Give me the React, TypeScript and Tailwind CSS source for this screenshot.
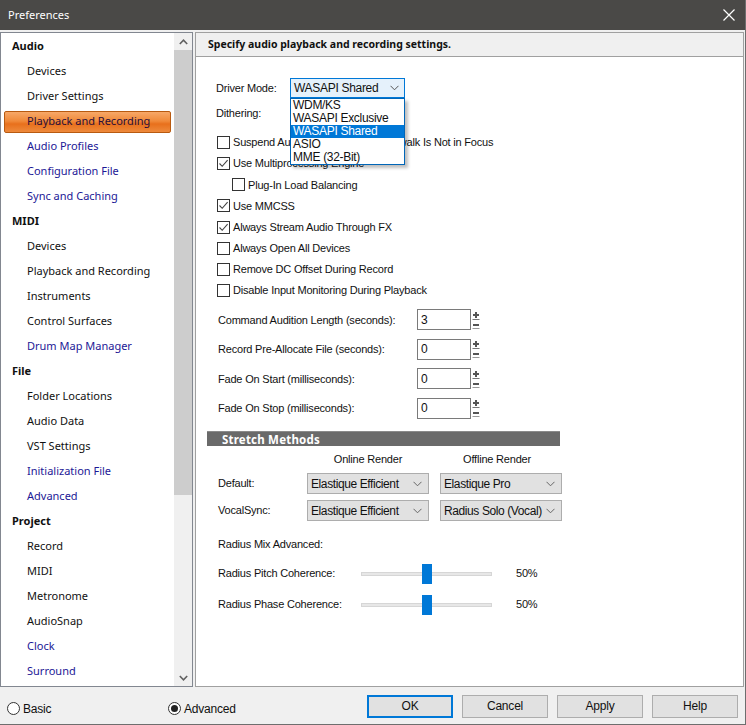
import React from 'react';

type Item = { t: string; head?: boolean; sel?: boolean; blue?: boolean };

const navItems: Item[] = [
  { t: 'Audio', head: true },
  { t: 'Devices' },
  { t: 'Driver Settings' },
  { t: 'Playback and Recording', sel: true },
  { t: 'Audio Profiles', blue: true },
  { t: 'Configuration File', blue: true },
  { t: 'Sync and Caching', blue: true },
  { t: 'MIDI', head: true },
  { t: 'Devices' },
  { t: 'Playback and Recording' },
  { t: 'Instruments' },
  { t: 'Control Surfaces' },
  { t: 'Drum Map Manager', blue: true },
  { t: 'File', head: true },
  { t: 'Folder Locations' },
  { t: 'Audio Data' },
  { t: 'VST Settings' },
  { t: 'Initialization File', blue: true },
  { t: 'Advanced', blue: true },
  { t: 'Project', head: true },
  { t: 'Record' },
  { t: 'MIDI' },
  { t: 'Metronome' },
  { t: 'AudioSnap' },
  { t: 'Clock', blue: true },
  { t: 'Surround', blue: true },
];

const ui = "font-['Liberation_Sans',Arial,sans-serif] text-[11px] tracking-[-0.2px] text-[#111]";
const seg = "font-['Noto_Sans','Open_Sans',sans-serif]";

function Chevron({ color = '#555' }: { color?: string }) {
  return (
    <svg width="9" height="6" viewBox="0 0 9 6" className="shrink-0">
      <polyline points="0.5,0.8 4.5,4.8 8.5,0.8" fill="none" stroke={color} strokeWidth="1" />
    </svg>
  );
}

function Check({ on, label, indent }: { on?: boolean; label: string; indent?: boolean }) {
  return (
    <div className={`flex items-center h-[21.15px] ${indent ? 'pl-[15px]' : ''}`}>
      <div className="w-[13px] h-[13px] border border-[#333] bg-white flex items-center justify-center shrink-0">
        {on && (
          <svg width="11" height="11" viewBox="0 0 11 11">
            <polyline points="1.5,5.5 4.2,8.3 9.6,2.2" fill="none" stroke="#444" strokeWidth="1.1" />
          </svg>
        )}
      </div>
      <span className="ml-[3px]">{label}</span>
    </div>
  );
}

function Spinner() {
  return (
    <svg width="8" height="20" viewBox="0 0 8 20" className="ml-[1px]">
      <rect x="0" y="1" width="8" height="18" fill="#fff" />
      <path d="M1 5h6M4 2v6" stroke="#555" strokeWidth="2" />
      <rect x="0.5" y="9" width="7" height="1" fill="#777" />
      <path d="M1 15h6" stroke="#555" strokeWidth="2" />
      <rect x="0.5" y="18" width="7" height="1" fill="#999" />
    </svg>
  );
}

function NumRow({ label, value }: { label: string; value: string }) {
  return (
    <div className="flex items-center h-[29.5px]">
      <span className="w-[200px] pl-[1px]">{label}</span>
      <div className="w-[54px] h-[21px] border border-[#7a7a7a] bg-white flex items-center pl-[3px] text-[12px]">{value}</div>
      <Spinner />
    </div>
  );
}

function Select({ text }: { text: string }) {
  return (
    <div className="w-[122px] h-[21px] border border-[#adadad] bg-[#e1e1e1] flex items-center justify-between pl-[3px] pr-[6px] text-[12px] tracking-[-0.4px]">
      <span>{text}</span>
      <Chevron color="#666" />
    </div>
  );
}

function Slider({ label }: { label: string }) {
  return (
    <div className="flex items-center h-[31px]">
      <span className="w-[144px] pl-[1px]">{label}</span>
      <div className="relative w-[131px] h-[20px] flex items-center">
        <div className="w-full h-[4px] bg-[#e7e7e7] border border-[#d6d6d6]" />
        <div className="absolute left-[61px] top-0 w-[10px] h-[20px] bg-[#0078d7]" />
      </div>
      <span className="ml-[24px]">50%</span>
    </div>
  );
}

export default function App() {
  return (
    <div className="w-[746px] h-[725px] bg-[#f0f0f0] flex flex-col overflow-hidden border-r border-b border-[#6e6e6e]">
      <div className="h-[30px] bg-[#4a4947] flex items-center justify-between pl-[8px] pr-[10px] shrink-0">
        <span className={`${seg} text-white text-[11px]`}>Preferences</span>
        <svg width="12" height="12" viewBox="0 0 12 12">
          <path d="M0.5 0.5L11.5 11.5M11.5 0.5L0.5 11.5" stroke="#fff" strokeWidth="1.2" />
        </svg>
      </div>

      <div className="flex pt-[2px] h-[657px] shrink-0">
        <div className="w-[193px] border border-[#828790] bg-white flex">
          <div className="flex-1 flex flex-col pt-[1px] overflow-hidden">
            {navItems.map((it, i) =>
              it.head ? (
                <div key={i} className={`${seg} h-[25px] flex items-center pl-[11px] text-[11px] font-bold text-[#111] shrink-0`}>{it.t}</div>
              ) : it.sel ? (
                <div key={i} className="h-[25px] flex items-center shrink-0 px-[3px]">
                  <div className={`${seg} w-full h-[22px] flex items-center pl-[22px] text-[11px] text-[#2a0e3a] rounded-[2px] border border-[#b85a10] bg-[linear-gradient(to_bottom,#f7a868_0%,#f08a3a_45%,#e8701c_60%,#ee8a3c_100%)]`}>{it.t}</div>
                </div>
              ) : (
                <div key={i} className={`${seg} h-[25px] flex items-center pl-[26px] text-[11px] shrink-0 ${it.blue ? 'text-[#1c1896]' : 'text-[#111]'}`}>{it.t}</div>
              )
            )}
          </div>
          <div className="w-[18px] flex flex-col bg-[#f0f0f0]">
            <div className="h-[17px] flex items-center justify-center shrink-0">
              <svg width="9" height="6" viewBox="0 0 9 6"><polyline points="0.8,5 4.5,1.2 8.2,5" fill="none" stroke="#606060" strokeWidth="1.6" /></svg>
            </div>
            <div className="h-[445px] bg-[#cdcdcd] shrink-0" />
            <div className="flex-1" />
            <div className="h-[17px] flex items-center justify-center shrink-0">
              <svg width="9" height="6" viewBox="0 0 9 6"><polyline points="0.8,1 4.5,4.8 8.2,1" fill="none" stroke="#606060" strokeWidth="1.6" /></svg>
            </div>
          </div>
        </div>

        <div className="flex-1 ml-[2px] mr-[1px] border border-[#a0a0a0] bg-white flex flex-col">
          <div className={`${seg} h-[24px] bg-[#f0f0f0] border-b border-[#a0a0a0] flex items-center pl-[12px] text-[10.5px] font-bold text-[#111] shrink-0`}>
            Specify audio playback and recording settings.
          </div>

          <div className={`${ui} flex flex-col pl-[21px]`}>
            <div className="flex items-center h-[20px] mt-[21px] -ml-[1px]">
              <span className="w-[74px]">Driver Mode:</span>
              <div className="relative">
                <div className="w-[115px] h-[20px] border border-[#0078d7] bg-[#e5f1fb] flex items-center justify-between pl-[3px] pr-[5px] text-[12px] tracking-[-0.3px]">
                  <span>WASAPI Shared</span>
                  <Chevron />
                </div>
                <div className="absolute left-0 top-[20px] w-[115px] border border-[#0066b8] bg-white flex flex-col text-[12px] tracking-[-0.3px] leading-[13px] shadow-[3px_3px_3px_rgba(0,0,0,0.25)] z-10">
                  <span className="pl-[2px] h-[13px]">WDM/KS</span>
                  <span className="pl-[2px] h-[13px]">WASAPI Exclusive</span>
                  <span className="pl-[2px] h-[13px] bg-[#0078d7] text-white">WASAPI Shared</span>
                  <span className="pl-[2px] h-[13px]">ASIO</span>
                  <span className="pl-[2px] h-[13px]">MME (32-Bit)</span>
                </div>
              </div>
            </div>
            <div className="flex items-center h-[20px] mt-[5px] -ml-[1px]">Dithering:</div>

            <div className="flex flex-col mt-[9px]">
              <Check label="Suspend Audio Engine When Cakewalk Is Not in Focus" />
              <Check on label="Use Multiprocessing Engine" />
              <Check indent label="Plug-In Load Balancing" />
              <Check on label="Use MMCSS" />
              <Check on label="Always Stream Audio Through FX" />
              <Check label="Always Open All Devices" />
              <Check label="Remove DC Offset During Record" />
              <Check label="Disable Input Monitoring During Playback" />
            </div>

            <div className="flex flex-col mt-[4px]">
              <NumRow label="Command Audition Length (seconds):" value="3" />
              <NumRow label="Record Pre-Allocate File (seconds):" value="0" />
              <NumRow label="Fade On Start  (milliseconds):" value="0" />
              <NumRow label="Fade On Stop  (milliseconds):" value="0" />
            </div>

            <div className={`${seg} mt-[8px] -ml-[10px] w-[353px] h-[15px] bg-[#6a6a6a] border-t border-[#8a8a8a] flex items-center pl-[15px] text-white font-bold text-[11.5px] tracking-[0.2px]`}>
              Stretch Methods
            </div>
            <div className="flex h-[22px] items-center mt-[2px]">
              <span className="w-[90px]" />
              <span className="w-[122px] text-center">Online Render</span>
              <span className="w-[11px]" />
              <span className="w-[114px] text-center">Offline Render</span>
            </div>
            <div className="flex items-center h-[27px]">
              <span className="w-[90px] pl-[1px]">Default:</span>
              <Select text="Elastique Efficient" />
              <span className="w-[11px]" />
              <Select text="Elastique Pro" />
            </div>
            <div className="flex items-center h-[27px]">
              <span className="w-[90px] pl-[1px]">VocalSync:</span>
              <Select text="Elastique Efficient" />
              <span className="w-[11px]" />
              <Select text="Radius Solo (Vocal)" />
            </div>
            <div className="flex items-center h-[20px] mt-[10px] pl-[1px]">Radius Mix Advanced:</div>
            <div className="flex flex-col mt-[4px]">
              <Slider label="Radius Pitch Coherence:" />
              <Slider label="Radius Phase Coherence:" />
            </div>
          </div>
        </div>
      </div>

      <div className={`${ui} flex items-center flex-1 pl-[7px] pr-[7px]`}>
        <div className="flex items-center w-[161px] mt-[6px]">
          <div className="w-[13px] h-[13px] rounded-full border border-[#333] bg-white" />
          <span className="ml-[3px] text-[12px]">Basic</span>
        </div>
        <div className="flex items-center mt-[6px]">
          <div className="w-[13px] h-[13px] rounded-full border border-[#333] bg-white flex items-center justify-center">
            <div className="w-[7px] h-[7px] rounded-full bg-[#222]" />
          </div>
          <span className="ml-[3px] text-[12px]">Advanced</span>
        </div>
        <div className="flex-1" />
        <div className="flex gap-[9px] text-[12px] mt-[1px]">
          <div className="w-[86px] h-[23px] border-2 border-[#0078d7] bg-[#e1e1e1] flex items-center justify-center">OK</div>
          <div className="w-[86px] h-[23px] border border-[#adadad] bg-[#e1e1e1] flex items-center justify-center">Cancel</div>
          <div className="w-[86px] h-[23px] border border-[#adadad] bg-[#e1e1e1] flex items-center justify-center">Apply</div>
          <div className="w-[86px] h-[23px] border border-[#adadad] bg-[#e1e1e1] flex items-center justify-center">Help</div>
        </div>
      </div>
    </div>
  );
}
